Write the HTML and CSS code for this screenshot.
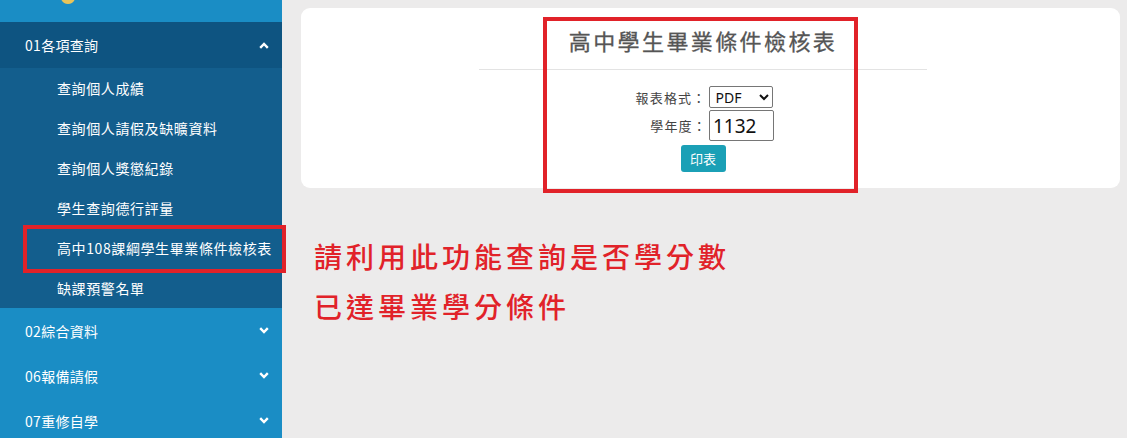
FILE: index.html
```html
<!DOCTYPE html>
<html lang="zh-Hant">
<head>
<meta charset="utf-8">
<title>高中學生畢業條件檢核表</title>
<link rel="stylesheet" href="styles.css">
</head>
<body>
<div class="layout">
  <aside class="sidebar">
    <div class="brand">
      <svg class="logo" width="14" height="6" viewBox="0 0 14 6"><path d="M0 0 H14 Q12 5 7 5 Q2 5 0 0 Z" fill="#e8c45a"/></svg>
    </div>
    <nav class="menu">
      <div class="group open">
        <div class="group-head">
          <span>01各項查詢</span>
          <svg class="chev" width="10" height="7" viewBox="0 0 10 7"><path d="M1.2 5.8 L5 2 L8.8 5.8" fill="none" stroke="#fff" stroke-width="2.4"/></svg>
        </div>
        <ul class="sub">
          <li>查詢個人成績</li>
          <li>查詢個人請假及缺曠資料</li>
          <li>查詢個人獎懲紀錄</li>
          <li>學生查詢德行評量</li>
          <li class="marked">高中108課綱學生畢業條件檢核表</li>
          <li>缺課預警名單</li>
        </ul>
      </div>
      <div class="group">
        <div class="group-head">
          <span>02綜合資料</span>
          <svg class="chev" width="10" height="7" viewBox="0 0 10 7"><path d="M1.2 1.2 L5 5 L8.8 1.2" fill="none" stroke="#fff" stroke-width="2.4"/></svg>
        </div>
      </div>
      <div class="group">
        <div class="group-head">
          <span>06報備請假</span>
          <svg class="chev" width="10" height="7" viewBox="0 0 10 7"><path d="M1.2 1.2 L5 5 L8.8 1.2" fill="none" stroke="#fff" stroke-width="2.4"/></svg>
        </div>
      </div>
      <div class="group">
        <div class="group-head">
          <span>07重修自學</span>
          <svg class="chev" width="10" height="7" viewBox="0 0 10 7"><path d="M1.2 1.2 L5 5 L8.8 1.2" fill="none" stroke="#fff" stroke-width="2.4"/></svg>
        </div>
      </div>
    </nav>
  </aside>
  <main class="main">
    <section class="card">
      <div class="card-inner">
        <div class="highlight">
          <h1 class="title">高中學生畢業條件檢核表</h1>
          <hr class="rule">
          <form class="form">
            <div class="row">
              <label class="lbl">報表格式：</label>
              <select class="sel"><option>PDF</option><option>XLS</option></select>
            </div>
            <div class="row">
              <label class="lbl">學年度：</label>
              <input class="inp" type="text" value="1132">
            </div>
            <button type="button" class="btn">印表</button>
          </form>
        </div>
      </div>
    </section>
    <p class="note">請利用此功能查詢是否學分數<br>已達畢業學分條件</p>
  </main>
</div>
</body>
</html>
```

FILE: styles.css
```css
html, body {
  margin: 0;
  padding: 0;
}
body {
  width: 1127px;
  height: 438px;
  overflow: hidden;
  background: #ecebeb;
  font-family: "Noto Sans CJK TC", "Noto Sans", sans-serif;
}
.layout {
  display: flex;
  height: 438px;
}
.sidebar {
  width: 282px;
  flex: none;
  background: #1a8dc5;
  color: #fff;
  height: 438px;
  position: relative;
  z-index: 1;
}
.brand {
  height: 22px;
  position: relative;
}
.logo {
  position: absolute;
  left: 61px;
  top: -1px;
}
.group-head {
  height: 45px;
  display: flex;
  align-items: center;
  justify-content: space-between;
  padding: 0 13px 0 25px;
  font-size: 14px;
  letter-spacing: 0.3px;
}
.group.open .group-head {
  height: 46px;
  background: #0e5481;
}
.chev {
  display: block;
}
.sub {
  list-style: none;
  margin: 0;
  padding: 0;
  background: #135e8d;
}
.sub li {
  height: 40px;
  display: flex;
  align-items: center;
  padding-left: 57px;
  font-size: 14px;
  letter-spacing: 0.6px;
  position: relative;
}
.sub li.marked::after {
  content: "";
  position: absolute;
  left: 23px;
  right: -4px;
  top: -3px;
  bottom: -5px;
  border: 4px solid #e12229;
  box-sizing: border-box;
}
.main {
  flex: 1;
  padding: 8px 7px 0 19px;
  position: relative;
}
.card {
  background: #fff;
  border-radius: 9px;
  height: 180px;
  box-sizing: border-box;
}
.card-inner {
  display: flex;
  justify-content: center;
  position: relative;
  height: 100%;
  padding-right: 20px;
  box-sizing: border-box;
}
.highlight {
  width: 315px;
  margin-top: 9px;
  height: 176px;
  box-sizing: border-box;
  padding: 4px;
  position: relative;
  display: flex;
  flex-direction: column;
  align-items: center;
}
.highlight::after {
  content: "";
  position: absolute;
  inset: 0;
  border: 4px solid #e12229;
  z-index: 2;
  pointer-events: none;
}
.title {
  margin: 4px 0 0 5px;
  font-size: 22px;
  font-weight: normal;
  color: #555;
  letter-spacing: 2.4px;
  line-height: 30px;
  -webkit-text-stroke: 0.3px #555;
}
.rule {
  position: absolute;
  top: 52px;
  left: -64px;
  width: 448px;
  margin: 0;
  border: 0;
  border-top: 1px solid #e3e3e3;
  z-index: 1;
}
.form {
  margin-top: 31px;
  padding-left: 5px;
  box-sizing: border-box;
  display: flex;
  flex-direction: column;
  align-items: center;
  width: 100%;
}
.row {
  display: flex;
  align-items: center;
  margin-bottom: 2px;
}
.lbl {
  width: 95px;
  text-align: right;
  font-size: 13px;
  letter-spacing: 1.2px;
  color: #444;
  margin-right: 2px;
  margin-left: -22px;
}
.sel {
  width: 64px;
  height: 22px;
  font-family: "Noto Sans", sans-serif;
  font-size: 14px;
  color: #111;
  border: 1px solid #767676;
  border-radius: 2px;
  background: #fff;
  padding: 0 2px;
}
.inp {
  width: 65px;
  height: 31px;
  box-sizing: border-box;
  font-family: "Noto Sans", sans-serif;
  font-size: 19px;
  color: #111;
  border: 1px solid #767676;
  border-radius: 2px;
  padding: 0 3px;
  margin-right: -2px;
}
.btn {
  margin-top: 2px;
  width: 45px;
  height: 27px;
  background: #1ba0b6;
  color: #fff;
  border: 0;
  border-radius: 3px;
  font-family: "Noto Sans CJK TC", sans-serif;
  font-size: 13px;
  padding: 0;
}
.note {
  margin: 43px 0 0 13px;
  color: #e12229;
  font-size: 28px;
  line-height: 50px;
  letter-spacing: 4px;
  font-weight: 500;
}
```
